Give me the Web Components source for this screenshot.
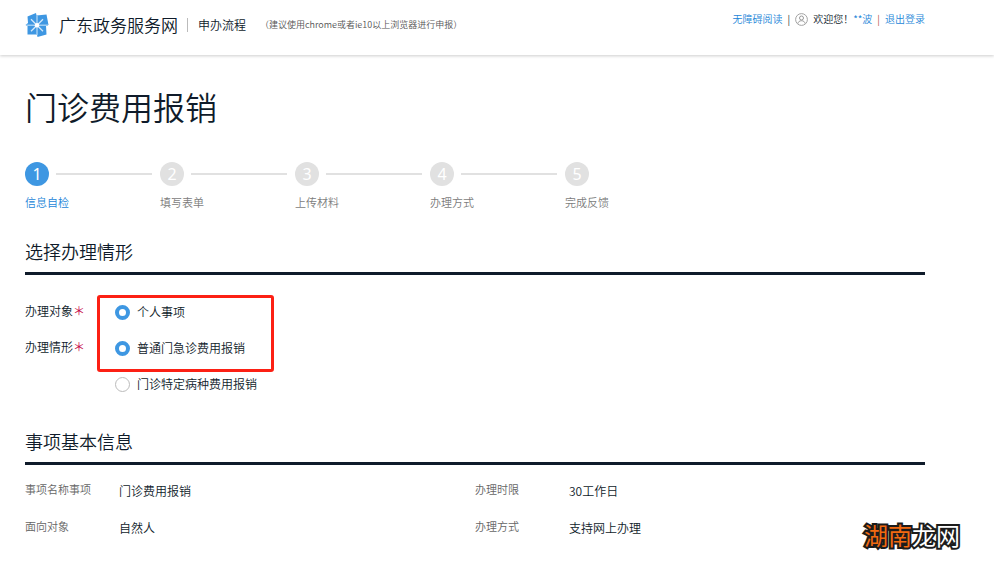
<!DOCTYPE html>
<html lang="zh-CN">
<head>
<meta charset="utf-8">
<title>门诊费用报销 - 广东政务服务网</title>
<style>
  :root {
    --ink: #0f1b2a;
    --blue: #3e97e2;
    --muted: #7c7c7c;
    --line: #e1e1e1;
    --gutter-left: 25px;
    --gutter-right: 69px;
  }
  body {
    margin: 0;
    background: #fff;
    color: var(--ink);
    font: 12px/16px "Noto Sans CJK SC", sans-serif;
    font-weight: 350;
  }
</style>
</head>
<body>
<service-page>
  <site-header slot="header"></site-header>
  <step-list current="1" steps="信息自检,填写表单,上传材料,办理方式,完成反馈"></step-list>
  <page-section heading="选择办理情形">
    <choice-form>
      <radio-row label="办理对象" options="个人事项" checked="0"></radio-row>
      <radio-row label="办理情形" options="普通门急诊费用报销,门诊特定病种费用报销" checked="0"></radio-row>
    </choice-form>
  </page-section>
  <page-section heading="事项基本信息">
    <info-grid>
      <info-item label="事项名称事项">门诊费用报销</info-item>
      <info-item label="办理时限">30工作日</info-item>
      <info-item label="面向对象">自然人</info-item>
      <info-item label="办理方式">支持网上办理</info-item>
    </info-grid>
  </page-section>
  <water-mark slot="mark"><span slot="accent">湖南</span>龙网</water-mark>
</service-page>

<script>
const define = (name, render) => customElements.define(name, class extends HTMLElement {
  connectedCallback() {
    if (this.shadowRoot) return;
    this.attachShadow({ mode: 'open' }).innerHTML = render(this);
  }
});
const list = (el, attr) => el.getAttribute(attr).split(',');

define('service-page', () => `
  <style>
    :host { display: block; position: relative; min-height: 100vh; }
    main { padding: 31px var(--gutter-right) 14px var(--gutter-left); }
    h1 { margin: 0 0 36px; font-size: 32px; line-height: 40px; font-weight: 350; }
  </style>
  <slot name="header"></slot>
  <main><h1>门诊费用报销</h1><slot></slot></main>
  <slot name="mark"></slot>`);

define('site-header', () => `
  <style>
    :host { display: block; box-shadow: 0 1px 3px rgba(0,0,0,.2); }
    header { display: flex; justify-content: space-between; padding: 0 var(--gutter-right) 6px var(--gutter-left); min-height: 49px; }
    .brand, nav, .user { display: flex; align-items: center; }
    .logo { width: 24px; height: 24px; margin-right: 10px; }
    strong { font-size: 17px; line-height: 24px; font-weight: 350; }
    .flow { margin-left: 9px; padding-left: 10px; border-left: 1px solid #bbb; line-height: 14px; }
    small { margin-left: 14px; font-size: 9px; color: #555; }
    nav { align-self: flex-start; padding-top: 11px; font-size: 10px; gap: 5px; white-space: nowrap; }
    a { color: #2385d8; text-decoration: none; }
    .user { gap: 5px; }
    .user svg { width: 13px; height: 13px; }
    .warm { color: #b0502c; }
  </style>
  <header>
    <div class="brand">
      <svg class="logo" viewBox="0 0 24 24" aria-hidden="true">
        <path fill="#3e97e2" d="M2.500 3.500 11 0 11.500 2.500 21.500 1.500 23.500 12 21 12.500 21.500 21.500 12.500 24 12 21.500 2.500 21.500 2.500 13 .5 12 3 10Z"/>
        <path stroke="#9fcdf2" stroke-width="1.500" d="M12 2.500V22M1 12.200H23"/>
        <path stroke="#d2e8fa" stroke-width="1.300" d="M6 6.200 18 18.200M18 6.200 6 18.200"/>
        <circle cx="12" cy="12.200" r="2.200" fill="#fff"/>
      </svg>
      <strong>广东政务服务网</strong>
      <span class="flow">申办流程</span>
      <small>（建议使用chrome或者ie10以上浏览器进行申报）</small>
    </div>
    <nav>
      <a href="#read">无障碍阅读</a><span>|</span>
      <span class="user">
        <svg viewBox="0 0 13 13" fill="none" stroke="#999" aria-hidden="true">
          <circle cx="6.500" cy="6.500" r="5.900" stroke-width=".9"/>
          <circle cx="6.500" cy="5" r="2"/>
          <path d="M3 10.500C3.200 6.800 9.800 6.800 10 10.500"/>
        </svg>
        <span>欢迎您！<a href="#user">**波</a></span>
      </span>
      <span class="warm">|</span><a href="#logout">退出登录</a>
    </nav>
  </header>`);

define('step-list', el => {
  const current = Number(el.getAttribute('current'));
  return `
  <style>
    :host { display: block; margin-bottom: 29px; }
    ol { display: flex; margin: 0; padding: 0; list-style: none; }
    li { flex: 0 1 135px; color: var(--muted); font-size: 11px; }
    .track { display: flex; align-items: center; gap: 7px; margin-bottom: 8px; padding-right: 8px; }
    .dot { flex: none; width: 24px; height: 24px; border-radius: 50%; background: var(--line); color: #fff; font: 16px/24px "Noto Sans", sans-serif; text-align: center; }
    .track::after { content: ""; flex: 1; height: 2px; background: var(--line); }
    li:last-child .track::after { content: none; }
    .on { color: #2385d8; }
    .on .dot { background: var(--blue); }
  </style>
  <ol>${list(el, 'steps').map((name, i) => `
    <li${i + 1 === current ? ' class="on" aria-current="step"' : ''}><div class="track"><span class="dot">${i + 1}</span></div>${name}</li>`).join('')}
  </ol>`;
});

define('page-section', el => `
  <style>
    :host { display: block; }
    :host(:not(:last-of-type)) { margin-bottom: 27px; }
    h2 { margin: 0; padding-bottom: 9px; border-bottom: 3px solid var(--ink); font-size: 18px; line-height: 24px; font-weight: 350; }
  </style>
  <section><h2>${el.getAttribute('heading')}</h2><slot></slot></section>`);

define('choice-form', () => `
  <style>
    :host { display: block; position: relative; padding-top: 19px; }
    .frame { position: absolute; left: 72px; top: 20px; width: 171px; height: 71px; border: 3px solid #fc2014; border-radius: 3px; pointer-events: none; }
  </style>
  <form><slot></slot></form>
  <div class="frame"></div>`);

define('radio-row', el => {
  const checked = Number(el.getAttribute('checked'));
  return `
  <style>
    :host { display: block; }
    .row { display: grid; grid-template-columns: 90px 1fr; }
    .name { display: flex; align-items: center; height: 34px; }
    .name b { color: #c8104c; font-weight: 400; }
    label { display: flex; align-items: center; gap: 7px; height: 36px; }
    input { appearance: none; box-sizing: border-box; width: 15px; height: 15px; margin: 0; border: 1px solid #bbb; border-radius: 50%; background: #fff; }
    input:checked { border: 4px solid var(--blue); }
  </style>
  <div class="row" role="radiogroup" aria-labelledby="name">
    <span class="name" id="name">${el.getAttribute('label')}<b>＊</b></span>
    <div>${list(el, 'options').map((text, i) => `
      <label><input type="radio" name="choice" value="${i}"${i === checked ? ' checked' : ''}>${text}</label>`).join('')}
    </div>
  </div>`;
});

define('info-grid', () => `
  <style>
    :host { display: grid; grid-template-columns: 1fr 1fr; padding-top: 7px; }
  </style>
  <slot></slot>`);

define('info-item', el => `
  <style>
    :host { display: block; }
    dl { display: grid; grid-template-columns: 94px 1fr; margin: 0; line-height: 37px; }
    dt { color: #666; font-size: 11px; line-height: 35px; }
    dd { margin: 0; }
  </style>
  <dl><dt>${el.getAttribute('label')}</dt><dd><slot></slot></dd></dl>`);

define('water-mark', () => `
  <style>
    :host { display: block; position: absolute; right: 34px; bottom: 9px; color: #fff; font-size: 24px; line-height: 36px; font-weight: 400; -webkit-text-stroke: 4px #1c1c1c; paint-order: stroke fill; }
    ::slotted([slot="accent"]) { color: #f26a10; }
  </style>
  <slot name="accent"></slot><slot></slot>`);
</script>
</body>
</html>
